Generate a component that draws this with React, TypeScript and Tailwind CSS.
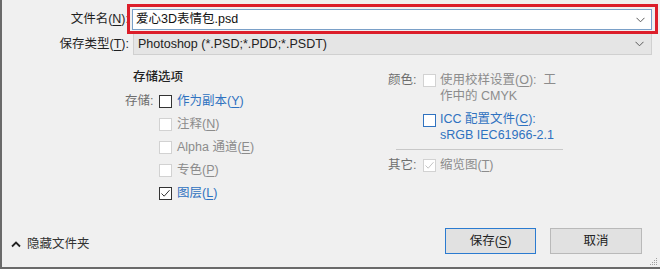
import React from "react";

const FONT = { fontFamily: '"Liberation Sans", "Noto Sans CJK SC", sans-serif' };

function Chevron({ className = "" }: { className?: string }) {
  return (
    <svg width="9" height="6" viewBox="0 0 9 6" className={className}>
      <path d="M0.5 0.8 L4.5 4.8 L8.5 0.8" fill="none" stroke="#5a5a5a" strokeWidth="1" />
    </svg>
  );
}

type BoxKind = "normal" | "disabled" | "blue";
function Box({ kind, checked }: { kind: BoxKind; checked?: boolean }) {
  const border =
    kind === "normal" ? "border-[#333333]" : kind === "blue" ? "border-[#2f72c0]" : "border-[#d2d2d2]";
  const stroke = kind === "disabled" ? "#c4c4c4" : "#333333";
  return (
    <div className={`w-[13px] h-[13px] border bg-white shrink-0 flex items-center justify-center ${border}`}>
      {checked && (
        <svg width="11" height="11" viewBox="0 0 11 11">
          <path d="M1.5 5.5 L4.2 8.2 L9.5 2.2" fill="none" stroke={stroke} strokeWidth="1" />
        </svg>
      )}
    </div>
  );
}

function U({ children }: { children: React.ReactNode }) {
  return <span className="underline underline-offset-2 decoration-1">{children}</span>;
}

export default function App() {
  return (
    <div
      style={FONT}
      className="relative w-[660px] h-[269px] bg-[#f0f0f0] border-l-2 border-b-2 border-[#6a6a6a] text-[12.5px] text-[#1f1f1f] overflow-hidden flex flex-col whitespace-nowrap"
    >
      {/* Row 1: file name */}
      <div className="flex items-center mt-[9px] h-[21px]">
        <div className="w-[128px] text-right shrink-0 pr-[1px]">
          文件名(<U>N</U>):
        </div>
        <div className="ml-[2px] w-[520px] h-[21px] bg-white border border-[#7aa0c8] flex items-center pl-[3px] pr-[6px]">
          <span className="flex-1 text-[#111]">爱心3D表情包.psd</span>
          <Chevron />
        </div>
      </div>
      {/* Row 2: type */}
      <div className="flex items-center mt-[3px] h-[22px]">
        <div className="w-[128px] text-right shrink-0 pr-[1px]">
          保存类型(<U>T</U>):
        </div>
        <div className="ml-[3px] w-[519px] h-[22px] bg-[#e5e5e5] border border-[#d0d0d0] flex items-center pl-[4px] pr-[7px]">
          <span className="flex-1 text-[#222]">Photoshop (*.PSD;*.PDD;*.PSDT)</span>
          <Chevron />
        </div>
      </div>

      {/* Options */}
      <div className="flex mt-[14px]">
        {/* left column */}
        <div className="ml-[123px] w-[263px] flex flex-col">
          <div className="pl-[8px] h-[17px] leading-[17px] text-[#222] font-medium">存储选项</div>
          <div className="mt-[6px] flex flex-col gap-[5px]">
            <div className="flex items-center h-[18px]">
              <div className="w-[34px] text-[#6e6e6e]">存储:</div>
              <Box kind="normal" />
              <div className="ml-[5px] text-[#2f72c0]">
                作为副本(<U>Y</U>)
              </div>
            </div>
            <div className="flex items-center h-[18px]">
              <div className="w-[34px]" />
              <Box kind="disabled" />
              <div className="ml-[5px] text-[#8c8c8c]">
                注释(<U>N</U>)
              </div>
            </div>
            <div className="flex items-center h-[18px]">
              <div className="w-[34px]" />
              <Box kind="disabled" />
              <div className="ml-[5px] text-[#8c8c8c]">
                Alpha 通道(<U>E</U>)
              </div>
            </div>
            <div className="flex items-center h-[18px]">
              <div className="w-[34px]" />
              <Box kind="disabled" />
              <div className="ml-[5px] text-[#8c8c8c]">
                专色(<U>P</U>)
              </div>
            </div>
            <div className="flex items-center h-[18px]">
              <div className="w-[34px]" />
              <Box kind="normal" checked />
              <div className="ml-[5px] text-[#2f72c0]">
                图层(<U>L</U>)
              </div>
            </div>
          </div>
        </div>

        {/* right column */}
        <div className="w-[180px] flex flex-col">
          <div className="flex items-start mt-[3px]">
            <div className="w-[35px] text-[#6e6e6e] leading-[16px]">颜色:</div>
            <div className="mt-[2px]">
              <Box kind="disabled" />
            </div>
            <div className="ml-[4px] text-[#8c8c8c] leading-[16px]">
              使用校样设置(<U>O</U>):&nbsp;&nbsp;工
              <br />
              作中的 CMYK
            </div>
          </div>
          <div className="flex items-start mt-[7px]">
            <div className="w-[35px]" />
            <div className="mt-[3px]">
              <Box kind="blue" />
            </div>
            <div className="ml-[4px] text-[#2f72c0] leading-[16px]">
              ICC 配置文件(<U>C</U>):
              <br />
              sRGB IEC61966-2.1
            </div>
          </div>
          <div className="ml-[8px] w-[167px] h-px bg-[#c8c8c8] mt-[6px]" />
          <div className="flex items-center mt-[7px] h-[16px]">
            <div className="w-[35px] text-[#6e6e6e]">其它:</div>
            <Box kind="disabled" checked />
            <div className="ml-[4px] text-[#8c8c8c]">
              缩览图(<U>T</U>)
            </div>
          </div>
        </div>
      </div>

      {/* Bottom */}
      <div className="mt-auto mb-[13px] flex items-center">
        <div className="flex items-center ml-[9px] mt-[6px]">
          <svg width="10" height="7" viewBox="0 0 10 7">
            <path d="M1 5.5 L5 1.5 L9 5.5" fill="none" stroke="#222" strokeWidth="1.8" />
          </svg>
          <span className="ml-[6px] text-[#333]">隐藏文件夹</span>
        </div>
        <div className="ml-auto flex gap-[14px] mr-[18px]">
          <div className="w-[91px] h-[26px] bg-[#e1e1e1] border border-[#2b7bd0] flex items-center justify-center text-[#222]">
            保存(<U>S</U>)
          </div>
          <div className="w-[92px] h-[26px] bg-[#e1e1e1] border border-[#b9b9b9] flex items-center justify-center text-[#222]">
            取消
          </div>
        </div>
      </div>

      {/* Resize grip */}
      <svg className="absolute right-[2px] bottom-[1px]" width="8" height="8" viewBox="0 0 8 8">
        <rect x="6" y="0" width="1" height="1" fill="#a0a0a0" />
        <rect x="4" y="2" width="1" height="1" fill="#a0a0a0" />
        <rect x="6" y="2" width="1" height="1" fill="#a0a0a0" />
        <rect x="2" y="4" width="1" height="1" fill="#a0a0a0" />
        <rect x="4" y="4" width="1" height="1" fill="#a0a0a0" />
        <rect x="6" y="4" width="1" height="1" fill="#a0a0a0" />
        <rect x="0" y="6" width="1" height="1" fill="#a0a0a0" />
        <rect x="2" y="6" width="1" height="1" fill="#a0a0a0" />
        <rect x="4" y="6" width="1" height="1" fill="#a0a0a0" />
        <rect x="6" y="6" width="1" height="1" fill="#a0a0a0" />
      </svg>

      {/* Red annotation box */}
      <div className="absolute left-[125px] top-[4px] w-[531px] h-[30px] border-[3px] border-[#dc1e2a] pointer-events-none" />
    </div>
  );
}
